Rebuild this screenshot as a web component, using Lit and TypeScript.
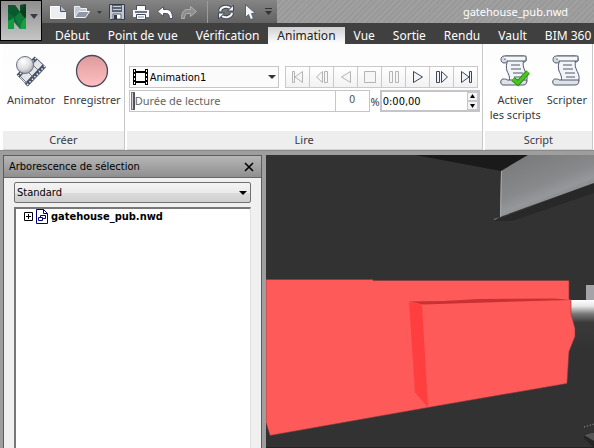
import { LitElement, html, css, svg } from "lit";
import { customElement, state } from "lit/decorators.js";
import { classMap } from "lit/directives/class-map.js";

const tabs = ["Début", "Point de vue", "Vérification", "Animation", "Vue", "Sortie", "Rendu", "Vault", "BIM 360"];

/* Each transport glyph is drawn on a 24 x 20 field. */
const transport = [
  { name: "Retour au début", off: true, shape: svg`<path d="M6.500 4.500h2v11h-2zM16.500 4.500v11l-7.500-5.500z"/>` },
  { name: "Pas en arrière", off: true, shape: svg`<path d="M14.500 4.500h3v11h-3zM12.500 4.500v11l-6-5.500z"/>` },
  { name: "Lecture inversée", off: true, shape: svg`<path d="M16.500 4.500v11L7.500 10z"/>` },
  { name: "Arrêt", off: true, shape: svg`<path d="M6.500 4.500h11v11h-11z"/>` },
  { name: "Pause", off: true, shape: svg`<path d="M7.500 4.500h3v11h-3zM13.500 4.500h3v11h-3z"/>` },
  { name: "Lecture", off: false, shape: svg`<path d="M7.500 4.500v11l9-5.500z"/>` },
  { name: "Pas en avant", off: false, shape: svg`<path d="M6.500 4.500h3v11h-3zM11.500 4.500v11l6-5.500z"/>` },
  { name: "Aller à la fin", off: false, shape: svg`<path d="M15.500 4.500h2v11h-2zM7.500 4.500v11l7.500-5.500z"/>` },
];

const icons = {
  logo: html`<svg width="20" height="26" viewBox="0 0 20 26" aria-hidden="true">
    <path d="M1 1h7l5 7V1l6-1v25h-6l-6-7v7H1z" fill="#0b6a34"/>
    <path d="M1 1h7l5 7-5 5-7-4z" fill="#0a5a30"/>
    <path d="M13 1l6-1-3 9-3-1z" fill="#0f4a20"/>
    <path d="M13 8l6-8v14l-9-2z" fill="#0a3f1e"/>
    <path d="M8 13l5-5 6 8v9h-6z" fill="#0e7d3a"/>
    <path d="M1 17l6-3v11H1z" fill="#159a40"/>
    <path d="M19 13v12h-6l2-7z" fill="#18a044"/></svg>`,
  fresh: html`<svg width="18" height="18" viewBox="0 0 18 18" aria-hidden="true">
    <path d="M1.500 3.500h10l5 5v7h-15z" fill="#eceef2" stroke="#fff"/><path d="M11.500 3v5.500H17" fill="#b9bfcb" stroke="#4a5366"/></svg>`,
  open: html`<svg width="18" height="18" viewBox="0 0 18 18" aria-hidden="true">
    <path d="M1.500 14.500v-11h5l1 2h6v3" fill="#c3c8d1" stroke="#eef0f4"/><path d="M1.500 14.500l4-6h11l-4 6z" fill="#8f97a6" stroke="#f4f5f8"/></svg>`,
  save: html`<svg width="18" height="18" viewBox="0 0 18 18" aria-hidden="true">
    <path d="M1.500 1.500h15v15h-14l-1-1z" fill="#c3c8d2" stroke="#323b4c"/><path d="M4 2h10v7H4z" fill="#5a6374"/><path d="M5 3h8v1H5zM5 6h8v1H5z" fill="#c9ced8"/>
    <path d="M5 11h8v5H5z" fill="#fff" stroke="#59616f"/><path d="M6 12h3v4H6z" fill="#2f3848"/></svg>`,
  print: html`<svg width="18" height="18" viewBox="0 0 18 18" aria-hidden="true">
    <path d="M4.500 7V2.500h9V7" fill="#fff" stroke="#444d5e"/><path d="M1 7h16v7H1z" fill="#f4f5f8"/><path d="M3 8h12v2H3z" fill="#6b7484"/>
    <path d="M4.500 11.500h9v5h-9z" fill="#fff" stroke="#444d5e"/><path d="M6 14h6" stroke="#7d8594"/></svg>`,
  undo: html`<svg width="18" height="18" viewBox="0 0 18 18" aria-hidden="true">
    <path d="M1.500 8.500l6-5v3h3c4 0 6 3 6 9h-3c0-3-1-5-3-5h-3v3z" fill="#fff" stroke="#4a5263"/></svg>`,
  redo: html`<svg width="18" height="18" viewBox="0 0 18 18" aria-hidden="true">
    <path d="M16.500 8.500l-6-5v3h-3c-4 0-6 3-6 9h3c0-3 1-5 3-5h3v3z" fill="#8e8e8e" stroke="#b0b0b0"/></svg>`,
  refresh: html`<svg width="18" height="18" viewBox="0 0 18 18" aria-hidden="true" fill="none">
    <path d="M3 8a6 5 0 0 1 10-3M15 10a6 5 0 0 1-10 3" stroke="#3d4656" stroke-width="4"/>
    <path d="M3 8a6 5 0 0 1 10-3M15 10a6 5 0 0 1-10 3" stroke="#f4f5f8" stroke-width="2"/>
    <path d="M16.500 2v6h-6zM1.500 16v-6h6z" fill="#f4f5f8" stroke="#3d4656"/></svg>`,
  pointer: html`<svg width="18" height="18" viewBox="0 0 18 18" aria-hidden="true">
    <path d="M4.500 1.500v13l3-3 2 5 3-1-2-5h4z" fill="#f4f5f8" stroke="#596070"/></svg>`,
  animator: html`<svg width="34" height="34" viewBox="0 0 34 34" aria-hidden="true">
    <defs>
      <radialGradient id="ball" cx=".4" cy=".3" r=".75"><stop offset="0" stop-color="#fff"/><stop offset=".6" stop-color="#dcdcde"/><stop offset="1" stop-color="#999ca3"/></radialGradient>
      <linearGradient id="strip" x2="1" y2="1"><stop offset="0" stop-color="#c9cdd4"/><stop offset="1" stop-color="#fff"/></linearGradient>
    </defs>
    <path d="M21 3 32 13 14 32 3 21z" fill="url(#strip)" stroke="#8b92a0"/>
    <path d="M30 12 12 31M22 4 4 22" stroke="#485063" stroke-width="4"/>
    <path d="M31 12 13 31M22 4 4 22" stroke="#eef0f3" stroke-width="1.500" stroke-dasharray="1.500 2"/>
    <path d="M17 9l8 8M11 15l8 8M5 21l8 8M23 5l7 7" stroke="#6d7585"/>
    <circle cx="11" cy="11" r="8.500" fill="url(#ball)" stroke="#6a7180"/></svg>`,
  record: html`<svg width="34" height="34" viewBox="0 0 34 34" aria-hidden="true">
    <defs><linearGradient id="rose" x2="0" y2="1"><stop offset="0" stop-color="#dd9a9c"/><stop offset="1" stop-color="#ffc0c1"/></linearGradient></defs>
    <circle cx="17" cy="17" r="15.500" fill="url(#rose)" stroke="#4a4a5c" stroke-width="1.300"/></svg>`,
  film: html`<svg class="film" width="17" height="16" viewBox="0 0 17 16" aria-hidden="true">
    <path d="M2.500 0v16M14.500 0v16" stroke="#000" stroke-width="3"/><path d="M2.500 1v15M14.500 1v15" stroke="#fff" stroke-dasharray="2 2"/>
    <path d="M4 3h9M4 13h9" stroke="#000" stroke-width="2"/></svg>`,
  file: html`<svg width="12" height="15" viewBox="0 0 12 15" aria-hidden="true" fill="#fff" stroke="#00007c">
    <path d="M.5.500h7l4 4v10H.5z"/><path d="M7.500.500v4h4" fill="none"/><path d="M2.500 8.500h4v3h-4zM4.500 8.500v-2h5v3h-3" fill="none"/></svg>`,
};

const scroll = (tick: boolean) => html`<svg width="32" height="34" viewBox="0 0 32 34" aria-hidden="true">
  <path d="M9 6h16c-2 5 0 9 2 13 2 5 1 8-1 10H9c3-4 1-8-1-12-1-4-1-7 1-11z" fill="#f3f4f7" stroke="#4f586a"/>
  <path d="M6 2h18c4 0 4 6 1 6-2 0-2-3 0-3" fill="#fafbfc" stroke="#4f586a"/>
  <path d="M5 2c-4 0-4 7 0 7 3 0 4-2 3-4H5" fill="#d5d9e0" stroke="#4f586a"/><path d="M5 2h22v5H8" fill="#f5f6f8" stroke="#4f586a"/>
  <path d="M4 25c-3 0-3 6 0 6h20c3 0 4-2 4-5H8c0-1-2-1-4-1z" fill="#dfe2e8" stroke="#4f586a"/>
  <path d="M12 11h9M12 15h10M14 19h10M15 23h9" stroke="#4f586a"/>
  ${tick ? svg`<path d="M14 25l5 4 10-11" fill="none" stroke="#2f8f16" stroke-width="5"/><path d="M14 25l5 4 10-11" fill="none" stroke="#4cc425" stroke-width="3"/>` : ""}
</svg>`;

@customElement("quick-bar")
class QuickBar extends LitElement {
  static styles = css`
    :host { display: flex; height: 23px; overflow: hidden; font: 11px/23px "Noto Sans", sans-serif; }
    .tools { flex: none; display: flex; align-items: center; gap: 6px; padding: 0 5px 0 7px; background: linear-gradient(#858585, #626262); }
    button { width: 18px; height: 20px; padding: 0; border: 0; background: none; }
    button.slim { width: 5px; }
    button.more { width: 7px; }
    svg { display: block; }
    .sep { width: 1px; height: 22px; margin: 0 3px; background: #9b9b9b; }
    .title { flex: 1; min-width: 0; padding-left: 160px; text-align: center; color: #fff; white-space: nowrap;
      background: repeating-linear-gradient(135deg, #a0a0a0 0 2px, #999 2px 4px); }
  `;
  render() {
    const b = (label: string, icon: unknown) => html`<button aria-label=${label}>${icon}</button>`;
    return html`
      <div class="tools">
        ${b("Nouveau", icons.fresh)}${b("Ouvrir", icons.open)}
        <button class="slim" aria-label="Fichiers récents"><svg width="5" height="20" viewBox="0 0 5 20"><path d="M0 9h5L2.500 12z" fill="#3a3a3a"/></svg></button>
        ${b("Enregistrer", icons.save)}${b("Imprimer", icons.print)}${b("Annuler", icons.undo)}${b("Rétablir", icons.redo)}
        <span class="sep"></span>
        ${b("Actualiser", icons.refresh)}${b("Sélectionner", icons.pointer)}
        <button class="more" aria-label="Personnaliser"><svg width="7" height="20" viewBox="0 0 7 20"><path d="M0 6h7v1H0zM0 9h7l-3.500 4z" fill="#333"/></svg></button>
      </div>
      <div class="title">gatehouse_pub.nwd</div>`;
  }
}

@customElement("ribbon-panels")
class RibbonPanels extends LitElement {
  static styles = css`
    :host { display: flex; gap: 2px; height: 107px; padding: 0 1px 0 3px; background: #fff; box-sizing: border-box;
      font: 11px/15px "Noto Sans", sans-serif; color: #3a3a44; border-bottom: 1px solid #8a8a8a; }
    section { display: flex; flex-direction: column; border-right: 1px solid #c8c8c8; }
    h2 { margin: 0; height: 18px; line-height: 18px; text-align: center; font-size: 11px; font-weight: 400; background: #eee; border-bottom: 1px solid #d4d4d4; }
    svg { display: block; }
    .body { flex: 1; display: flex; padding-top: 10px; background: linear-gradient(#fdfdfd, #fff); }
    .wide { flex: 1; min-width: 0; }
    .create { padding-left: 4px; padding-right: 3px; gap: 8px; }
    .script { padding-left: 5px; padding-right: 5px; gap: 6px; }
    .big { display: flex; flex-direction: column; align-items: center; gap: 4px; border: 0; padding: 0; background: none; font: inherit; color: inherit; white-space: nowrap; }
    .play { flex-direction: column; gap: 2px; padding: 22px 2px 0 2px; }
    .row { display: flex; height: 22px; }
    .pick { position: relative; flex: none; width: 150px; margin-right: 6px; }
    .film { position: absolute; left: 3px; top: 3px; pointer-events: none; }
    .arrow { position: absolute; right: 2px; top: 9px; pointer-events: none; }
    select, input, output { box-sizing: border-box; font: 11px "DejaVu Sans Condensed", "DejaVu Sans", sans-serif; color: #000; }
    select { appearance: none; width: 100%; height: 22px; padding: 0 20px 0 20px; border: 1px solid #c6c6c6; border-radius: 0; background: #fbfbfb; }
    .keys { display: flex; }
    .keys button { width: 25px; height: 22px; margin-right: -1px; padding: 0; border: 1px solid #c9c9c9; background: linear-gradient(#fff, #f2f2f2); }
    .keys svg { fill: #f2f3f6; stroke: #3c4658; }
    .keys .off svg { fill: #f6f6f6; stroke: #b4b4b4; }
    .track { flex: 1; min-width: 0; display: grid; border: 1px solid #c6c6c6; }
    .track label, .track input { grid-area: 1 / 1; }
    .track label { padding-left: 5px; line-height: 20px; color: #666; white-space: nowrap; }
    .track input { appearance: none; width: 100%; height: 20px; margin: 0; padding: 1px; background: transparent; }
    .track input::-webkit-slider-thumb { appearance: none; width: 4px; height: 18px; background: #d2d2d2; border: 1px solid #777; border-right: 2px solid #555; }
    output { flex: none; width: 34px; border: 1px solid #c6c6c6; border-left: 0; text-align: center; line-height: 18px; color: #555; }
    .unit { padding: 4px 0 0 1px; }
    .time { flex: none; display: flex; width: 100px; border: 2px solid #c3c5cb; box-sizing: border-box; background: #fff; }
    .time input { flex: 1; min-width: 0; border: 0; padding: 0 0 0 1px; }
    .spin { display: flex; flex-direction: column; }
    .spin button { width: 11px; height: 9px; padding: 0; border: 1px solid #c8c8c8; background: #f4f4f4; }
  `;
  render() {
    return html`
      <section><div class="body create">
        <button class="big">${icons.animator}Animator</button>
        <button class="big">${icons.record}Enregistrer</button>
      </div><h2>Créer</h2></section>
      <section class="wide"><div class="body play">
        <div class="row">
          <div class="pick"><select aria-label="Animation"><option>Animation1</option></select>${icons.film}
            <svg class="arrow" width="9" height="5" viewBox="0 0 9 5"><path d="M0 0h8L4 4z" fill="#333"/></svg></div>
          <div class="keys">${transport.map(
            (t) => html`<button class=${classMap({ off: t.off })} ?disabled=${t.off} aria-label=${t.name}><svg width="24" height="20" viewBox="0 0 24 20">${t.shape}</svg></button>`
          )}</div>
        </div>
        <div class="row">
          <div class="track"><label for="pos">Durée de lecture</label><input id="pos" type="range" value="0" /></div>
          <output for="pos">0</output><span class="unit">%</span>
          <div class="time"><input aria-label="Temps" value="0:00,00" />
            <span class="spin">
              <button aria-label="Plus"><svg width="9" height="7" viewBox="0 0 9 7"><path d="M2 5h5L4.500 1z"/></svg></button>
              <button aria-label="Moins"><svg width="9" height="7" viewBox="0 0 9 7"><path d="M2 2h5L4.500 6z"/></svg></button>
            </span></div>
        </div>
      </div><h2>Lire</h2></section>
      <section><div class="body script">
        <button class="big">${scroll(true)}<span>Activer<br />les scripts</span></button>
        <button class="big">${scroll(false)}Scripter</button>
      </div><h2>Script</h2></section>`;
  }
}

@customElement("selection-tree")
class SelectionTree extends LitElement {
  static styles = css`
    :host { display: flex; flex-direction: column; box-sizing: border-box; border: 1px solid #5c5c5c; border-bottom: 0; background: #f0f0f0;
      font: 11px "DejaVu Sans Condensed", "DejaVu Sans", sans-serif; color: #000; }
    header { display: flex; align-items: center; justify-content: space-between; height: 21px; padding: 0 5px; background: linear-gradient(#b6b6b6, #8f8f8f); border-bottom: 1px solid #666; }
    h1 { margin: 0; font-size: 11px; font-weight: 400; }
    header button { width: 14px; height: 14px; padding: 0; border: 0; background: none; }
    svg { display: block; }
    .pick { position: relative; margin: 4px 10px; }
    select { appearance: none; box-sizing: border-box; width: 100%; height: 21px; padding: 0 2px; border: 1px solid #707070; border-radius: 2px; font: inherit; color: inherit;
      background: linear-gradient(#f4f4f4, #ebebeb 50%, #dcdcdc 50%, #cfcfcf); }
    .arrow { position: absolute; right: 4px; top: 9px; pointer-events: none; }
    .tree { flex: 1; margin: 0 10px; padding: 0 0 0 8px; border: 2px solid #777; border-right: 1px solid #e0e0e0; border-bottom: 0; background: #fff; list-style: none; }
    li { display: flex; align-items: center; gap: 3px; height: 14px; font-weight: 700; }
    li button { width: 9px; height: 9px; padding: 0; border: 0; background: none; }
  `;
  render() {
    return html`
      <header><h1>Arborescence de sélection</h1>
        <button aria-label="Fermer"><svg width="14" height="14" viewBox="0 0 14 14"><path d="M3 3l8 8M11 3l-8 8" stroke="#000" stroke-width="1.600"/></svg></button></header>
      <div class="pick"><select aria-label="Affichage"><option>Standard</option></select>
        <svg class="arrow" width="8" height="5" viewBox="0 0 8 5"><path d="M0 0h8L4 4z"/></svg></div>
      <ul class="tree"><li>
        <button aria-label="Développer"><svg width="9" height="9" viewBox="0 0 9 9" fill="#fff" stroke="#000"><path d="M.5.500h8v8h-8zM2 4.500h5M4.500 2v5"/></svg></button>
        ${icons.file}<span>gatehouse_pub.nwd</span></li></ul>`;
  }
}

@customElement("scene-view")
class SceneView extends LitElement {
  static styles = css`
    :host { display: block; position: relative; overflow: hidden; background: #323232; }
    svg { position: absolute; inset: 0; width: 100%; height: 100%; }
  `;
  render() {
    return html`<svg viewBox="0 0 328 293" preserveAspectRatio="xMinYMin slice" role="img" aria-label="Vue 3D">
      <defs>
        <linearGradient id="beam" gradientUnits="userSpaceOnUse" x1="268" y1="0" x2="286" y2="46"><stop offset="0" stop-color="#7b7c7d"/><stop offset=".6" stop-color="#88898b"/><stop offset=".85" stop-color="#96979b"/><stop offset="1" stop-color="#8b8c8f"/></linearGradient>
        <linearGradient id="glow" x2="0" y2="1"><stop offset="0" stop-color="#fff"/><stop offset=".12" stop-color="#e8e8e8"/><stop offset=".28" stop-color="#777"/><stop offset=".45" stop-color="#3a3a3a"/><stop offset="1" stop-color="#323232"/></linearGradient>
      </defs>
      <path d="M149 0l86 16 27-16z" fill="#1a1a1a"/>
      <path d="M228 66l100-38v10l-82 28z" fill="#282828"/>
      <path d="M235 16l27-16h66v28l-94 34-6 3v-1l6-2z" fill="url(#beam)"/>
      <path d="M235.500 16l-1 46" stroke="#aaabad" fill="none"/>
      <path d="M320 130h8v15h-8z" fill="#a4a4a8"/>
      <path d="M304 145h24v50h-24z" fill="url(#glow)"/>
      <path d="M0 124.500h107v1h196v19h2v14l4 15v8l-6 15-2 32-139 24-158 28-4-13z" fill="#ff5a5a" stroke="#7a3a3a" stroke-width=".6"/>
      <path d="M143 146.500l34-.5 36-2 76-.5 16 1.500-18 .5-67 2-63 2z" fill="#c93232"/>
      <path d="M143 147l13 2.500 6 103-13-15z" fill="#ff3f3f"/>
      <path d="M318 272l10-3" stroke="#aaa" stroke-dasharray="1 2" fill="none"/>
      <path d="M318 279l10-1v15l-10-10z" fill="#242424"/><path d="M318 280l8-2h2v8z" fill="#555"/>
      <path d="M0 292.500h328" stroke="#262028" fill="none"/>
    </svg>`;
  }
}

@customElement("app-root")
class AppRoot extends LitElement {
  @state() active = "Animation";
  static styles = css`
    :host { display: flex; flex-direction: column; min-height: 100vh; overflow: hidden; background: #9d9e9d; }
    .head { display: flex; height: 44px; background: #404040; }
    .app { display: flex; flex: none; align-items: center; gap: 3px; box-sizing: border-box; width: 42px; height: 41px; padding: 0 0 8px 6px; border: 1px solid #000;
      background: linear-gradient(#8f8f8f, #a9a9a9 50%, #c6c6c6); }
    .main { flex: 1; min-width: 0; }
    nav { display: flex; align-items: flex-end; height: 21px; padding-left: 4px; overflow: hidden; }
    nav button { flex: none; height: 17px; padding: 0 9px; border: 0; background: none; font: 12px/17px "Noto Sans", sans-serif; color: #fff; white-space: nowrap; }
    nav .on { background: linear-gradient(#d0d0d0, #fff); color: #222; }
    .work { flex: 1; display: flex; gap: 4px; padding: 4px 0 0 3px; }
    selection-tree { flex: none; width: 259px; }
    scene-view { flex: 1; }
  `;
  render() {
    return html`
      <div class="head">
        <button class="app" aria-label="Menu de l'application">${icons.logo}<svg width="8" height="5" viewBox="0 0 8 5"><path d="M0 0h8L4 5z" fill="#333c4a"/></svg></button>
        <div class="main"><quick-bar></quick-bar>
          <nav>${tabs.map((t) => html`<button class=${classMap({ on: t === this.active })} @click=${() => (this.active = t)}>${t}</button>`)}</nav></div>
      </div>
      <ribbon-panels></ribbon-panels>
      <div class="work"><selection-tree></selection-tree><scene-view></scene-view></div>`;
  }
}
